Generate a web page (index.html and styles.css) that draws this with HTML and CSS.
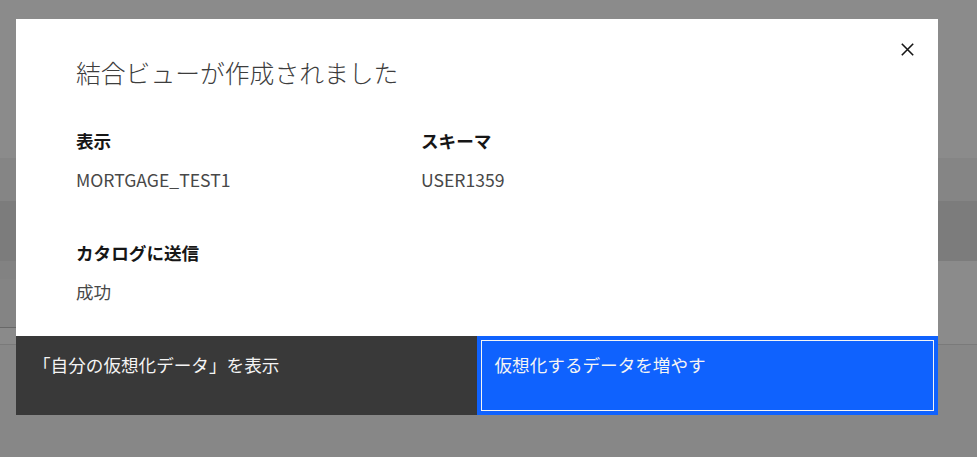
FILE: index.html
```html
<!DOCTYPE html>
<html lang="ja">
<head>
<meta charset="utf-8">
<title>結合ビューが作成されました</title>
<link rel="stylesheet" href="styles.css">
</head>
<body>
<div class="page">
  <div class="band band-a"></div>
  <div class="band band-b"></div>
  <div class="band band-c"></div>
  <div class="band-row">
    <div class="side-panel">
      <div class="sp-1"></div>
      <div class="sp-2"></div>
      <div class="sp-3"></div>
    </div>
    <div class="band-fill"></div>
  </div>
  <div class="band band-e"></div>
</div>

<div class="modal" role="dialog" aria-label="結合ビューが作成されました">
  <button class="close" aria-label="閉じる">
    <svg width="13" height="13" viewBox="0 0 13 13"><path d="M0.8 0.8 L12.2 12.2 M12.2 0.8 L0.8 12.2" stroke="#161616" stroke-width="1.6" fill="none"/></svg>
  </button>
  <div class="modal-header">
    <h2 class="title">結合ビューが作成されました</h2>
  </div>
  <div class="modal-body">
    <div class="grid">
      <div class="field">
        <div class="label">表示</div>
        <div class="value">MORTGAGE_TEST1</div>
      </div>
      <div class="field">
        <div class="label">スキーマ</div>
        <div class="value">USER1359</div>
      </div>
      <div class="field">
        <div class="label">カタログに送信</div>
        <div class="value">成功</div>
      </div>
    </div>
  </div>
  <div class="footer">
    <button class="btn btn-secondary">「自分の仮想化データ」を表示</button>
    <button class="btn btn-primary">仮想化するデータを増やす</button>
  </div>
</div>
</body>
</html>
```

FILE: styles.css
```css
* { box-sizing: border-box; }

html, body {
  margin: 0;
  padding: 0;
}

body {
  width: 977px;
  height: 457px;
  overflow: hidden;
  background: #888888;
  font-family: "Noto Sans CJK JP", "Noto Sans", sans-serif;
  position: relative;
}

.page {
  display: flex;
  flex-direction: column;
}

.band { width: 100%; }
.band-a { height: 158px; background: #8b8b8b; }
.band-b { height: 43px; background: #858585; }
.band-c { height: 60px; background: #7c7c7c; }

.band-row {
  display: flex;
  height: 84px;
  border-bottom: 1px solid #7a7a7a;
}

.side-panel {
  width: 400px;
  display: flex;
  flex-direction: column;
}
.sp-1 { height: 18px; background: #828282; }
.sp-2 { height: 49px; background: #848484; border-bottom: 1px solid #686868; }
.sp-3 { flex: 1; background: #8a8a8a; }

.band-fill { flex: 1; background: #8b8b8b; }

.band-e { height: 112px; background: #878787; }

.modal {
  position: absolute;
  top: 19px;
  left: 16px;
  width: 922px;
  height: 396px;
  background: #ffffff;
  display: flex;
  flex-direction: column;
}

.close {
  position: absolute;
  top: 24px;
  right: 24px;
  width: 13px;
  height: 13px;
  padding: 0;
  border: 0;
  background: transparent;
  display: flex;
}

.modal-header {
  padding: 37px 60px 0 60px;
}

.title {
  margin: 0;
  font-size: 24.8px;
  line-height: 32px;
  font-weight: 300;
  color: #3d3d3d;
}

.modal-body {
  flex: 1;
  padding: 41px 60px 0 60px;
}

.grid {
  display: grid;
  grid-template-columns: 345px 1fr;
  row-gap: 49px;
}

.label {
  font-size: 17.6px;
  line-height: 24px;
  font-weight: 700;
  color: #161616;
  margin-bottom: 15px;
}

.value {
  font-size: 17.6px;
  line-height: 24px;
  font-weight: 400;
  color: #484848;
}

.footer {
  display: flex;
  height: 79px;
}

.btn {
  flex: 1;
  border: 0;
  margin: 0;
  font-family: inherit;
  font-size: 17.6px;
  line-height: 24px;
  text-align: left;
  color: #f4f4f4;
  padding: 17px 16px 0 17px;
  display: flex;
  align-items: flex-start;
}

.btn-secondary {
  background: #393939;
}

.btn-primary {
  background: #0f62fe;
  padding-left: 18px;
  box-shadow: inset 0 0 0 4px #0f62fe, inset 0 0 0 5px #f4f4f4;
}
```
